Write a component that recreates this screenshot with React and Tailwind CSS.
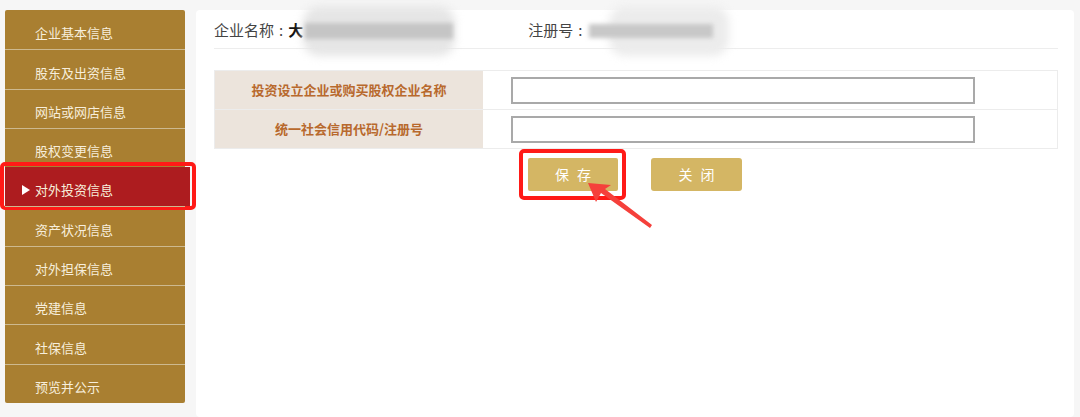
import React from "react";

const menu = [
  "企业基本信息",
  "股东及出资信息",
  "网站或网店信息",
  "股权变更信息",
  "对外投资信息",
  "资产状况信息",
  "对外担保信息",
  "党建信息",
  "社保信息",
  "预览并公示",
];

const font = { fontFamily: '"Noto Sans CJK SC", "Liberation Sans", sans-serif' };

export default function App() {
  return (
    <div className="w-[1080px] h-[417px] bg-[#f6f6f6] flex gap-[11px] pl-[5px] pt-[10px] overflow-hidden" style={font}>
      {/* Sidebar */}
      <div className="w-[180px] h-[393px] bg-[#a97f31] rounded-[2px] flex flex-col">
        {menu.map((item, i) => {
          const active = i === 4;
          return (
            <div
              key={item}
              className={`relative h-[39.3px] flex items-center pt-[6px] text-[13px] text-[#f7eedc] ${i > 0 ? "border-t border-[#cdb98f]" : ""} ${active ? "bg-[#ad1c1f] border-t-0 -mr-[5px]" : ""}`}
            >
              {active && (
                <span className="absolute left-[17px] top-[18px] w-0 h-0 border-y-[5px] border-y-transparent border-l-[8px] border-l-white" />
              )}
              <span className="pl-[30px]">{item}</span>
              {active && (
                <div className="absolute -left-[5px] -top-[5px] w-[196px] h-[48px] border-[4px] border-[#ff1a17] rounded-[5px]" />
              )}
            </div>
          );
        })}
      </div>

      {/* Main */}
      <div className="w-[878px] bg-white rounded-[4px] pl-[18px] pr-[16px] relative">
        <div className="h-[39px] flex items-center pt-[3px] border-b border-[#ededed] text-[15px] text-[#444]">
          <span>企业名称</span>
          <span className="mx-[5px]">:</span>
          <span className="text-[#111] font-bold">大</span>
          <span className="relative inline-block w-[150px] h-[22px] ml-[2px]">
            <span className="absolute -left-[2px] -top-[14px] w-[152px] h-[50px] bg-[#e6e6e6] rounded-[16px] blur-[4px]" />
            <span className="absolute left-0 top-[3px] w-[148px] h-[16px] bg-[#c5c5c5] blur-[2px]" />
          </span>
          <span className="ml-[73px]">注册号</span>
          <span className="mx-[5px]">:</span>
          <span className="relative inline-block w-[130px] h-[22px]">
            <span className="absolute left-[22px] -top-[14px] w-[120px] h-[50px] bg-[#ececec] rounded-[16px] blur-[4px]" />
            <span className="absolute left-[2px] top-[4px] w-[124px] h-[14px] bg-[#c8c8c8] blur-[2px]" />
          </span>
        </div>

        {/* Form table */}
        <div className="mt-[21px] w-[844px] border border-[#ececec]">
          <div className="flex h-[39px] border-b border-[#ececec]">
            <div className="w-[268px] bg-[#ece4dc] flex items-center justify-center text-[13px] font-bold text-[#b8692d]">
              投资设立企业或购买股权企业名称
            </div>
            <div className="flex-1 flex items-center pl-[28px]">
              <input className="w-[464px] h-[27px] border-2 border-[#a9a9a9] outline-none" />
            </div>
          </div>
          <div className="flex h-[38px]">
            <div className="w-[268px] bg-[#ece4dc] flex items-center justify-center text-[13px] font-bold text-[#b8692d]">
              统一社会信用代码/注册号
            </div>
            <div className="flex-1 flex items-center pl-[28px]">
              <input className="w-[464px] h-[27px] border-2 border-[#a9a9a9] outline-none" />
            </div>
          </div>
        </div>

        {/* Buttons */}
        <div className="flex gap-[33px] ml-[314px] mt-[9px]">
          <div className="relative">
            <button className="w-[90px] h-[33px] bg-[#d4b664] rounded-[2px] text-white text-[14px] tracking-[8px] pl-[8px]">
              保存
            </button>
            <div className="absolute -left-[9px] -top-[9px] w-[107px] h-[51px] border-[4px] border-[#ff1a17] rounded-[5px]" />
          </div>
          <button className="w-[91px] h-[33px] bg-[#d4b664] rounded-[3px] text-white text-[14px] tracking-[8px] pl-[8px]">
            关闭
          </button>
        </div>

        {/* Arrow annotation */}
        <svg className="absolute left-[384px] top-[165px]" width="80" height="65" viewBox="0 0 80 65">
          <polygon points="8,8 31,10 25,14 72,50 70,53 21,18 16,27" fill="#f5403b" />
        </svg>
      </div>
    </div>
  );
}
